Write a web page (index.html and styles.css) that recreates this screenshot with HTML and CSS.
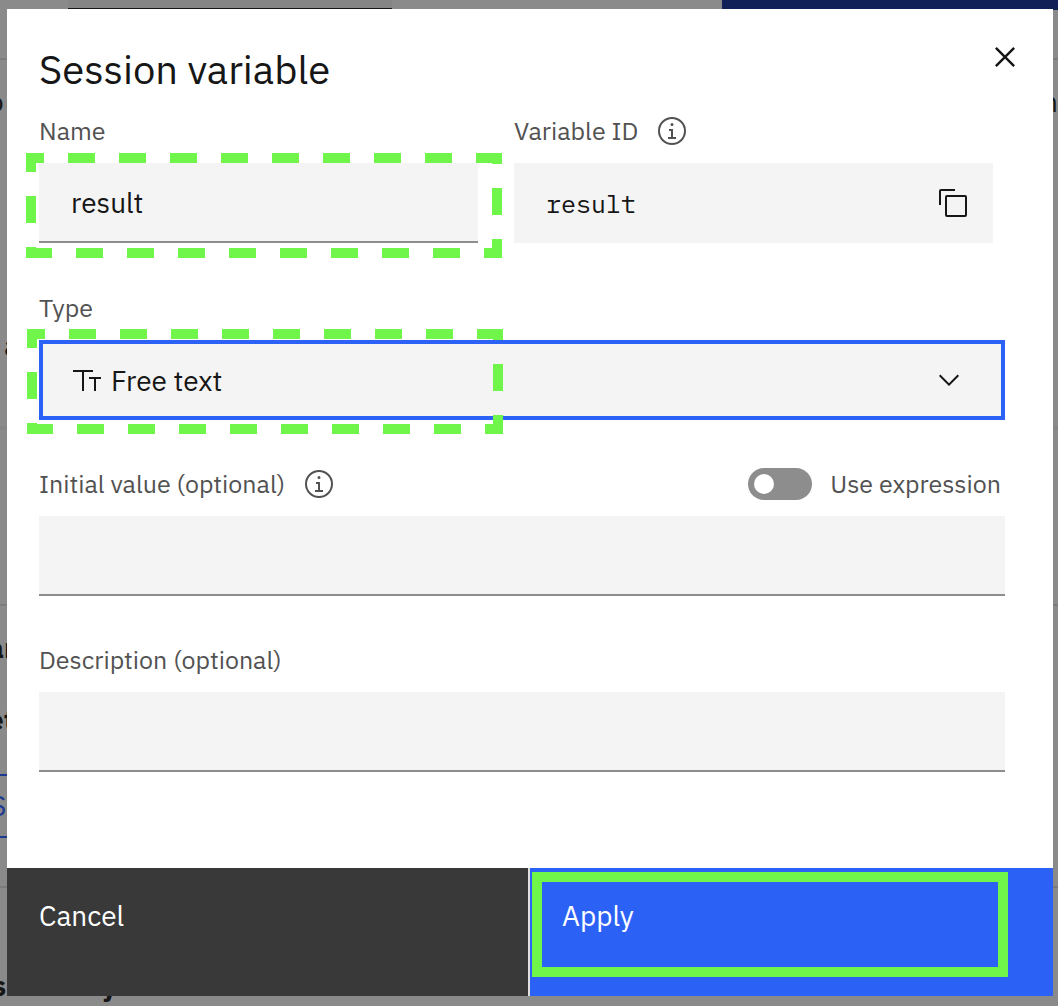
FILE: index.html
```html
<!DOCTYPE html>
<html lang="en">
<head>
<meta charset="utf-8">
<meta name="viewport" content="width=device-width, initial-scale=1">
<title>Session variable</title>
<link rel="stylesheet" href="styles.css">
</head>
<body>
<div class="page" aria-hidden="true">
  <div class="page-header"><span class="page-tab"></span><span class="page-action"></span></div>
  <div class="page-toolbar"></div>
  <div class="page-row row-intro"><span>o</span><span>n</span></div>
  <div class="page-row row-step"><span>a</span></div>
  <div class="page-row row-empty"></div>
  <div class="page-row row-answer">
    <strong>ar</strong>
    <strong>et</strong>
    <span class="page-button">S</span>
  </div>
  <div class="page-row row-last"><strong>s and bays</strong></div>
</div>

<main class="dialog" role="dialog" aria-labelledby="dialog-title">
  <form class="dialog-form">
    <div class="dialog-body">
      <header class="dialog-header">
        <h1 class="dialog-title" id="dialog-title">Session variable</h1>
        <button class="icon-button close" type="button" aria-label="Close">
          <svg viewBox="0 0 32 32" width="40" height="40"><path d="M24 9.4 22.6 8 16 14.6 9.4 8 8 9.4 14.6 16 8 22.6 9.4 24 16 17.4 22.6 24 24 22.6 17.4 16z"/></svg>
        </button>
      </header>

      <div class="field-pair">
        <div class="field">
          <div class="label-row"><label for="name">Name</label></div>
          <div class="control">
            <input class="text-input" id="name" type="text" value="result">
            <svg class="highlight" width="476" height="105" viewBox="0 0 476 105"><rect x="5" y="5" width="466" height="95"/></svg>
          </div>
        </div>
        <div class="field">
          <div class="label-row">
            <label for="variable-id">Variable ID</label>
            <button class="icon-button info" type="button" aria-label="About the variable ID">
              <svg viewBox="0 0 32 32" width="32" height="32"><path d="M17 22v-8h-4v2h2v6h-3v2h8v-2zM16 8a1.5 1.5 0 1 0 1.5 1.5A1.5 1.5 0 0 0 16 8z"/><path d="M16 30a14 14 0 1 1 14-14 14 14 0 0 1-14 14zm0-26a12 12 0 1 0 12 12A12 12 0 0 0 16 4z"/></svg>
            </button>
          </div>
          <div class="copy-box">
            <input class="id-input" id="variable-id" type="text" value="result" readonly>
            <button class="icon-button" type="button" aria-label="Copy">
              <svg viewBox="0 0 32 32" width="32" height="32"><path d="M28 10v18H10V10h18m0-2H10a2 2 0 0 0-2 2v18a2 2 0 0 0 2 2h18a2 2 0 0 0 2-2V10a2 2 0 0 0-2-2z"/><path d="M4 18H2V4a2 2 0 0 1 2-2h14v2H4z"/></svg>
            </button>
          </div>
        </div>
      </div>

      <div class="field">
        <div class="label-row"><label for="type">Type</label></div>
        <div class="control">
          <select class="select" id="type"><option>Free text</option></select>
          <svg class="type-icon" width="28" height="21" viewBox="0 0 28 21"><path d="M0 0h20v2h-9v19H9V2H0zM16 7h12v2h-5v12h-2V9h-5z"/></svg>
          <svg class="chevron" width="32" height="32" viewBox="0 0 16 16"><path d="M8 11 3 6l.7-.7L8 9.6l4.3-4.3.7.7z"/></svg>
          <svg class="highlight highlight-type" width="476" height="105" viewBox="0 0 476 105"><rect x="5" y="5" width="466" height="95"/></svg>
        </div>
      </div>

      <div class="field">
        <div class="label-row">
          <label for="initial">Initial value (optional)</label>
          <button class="icon-button info" type="button" aria-label="About the initial value">
            <svg viewBox="0 0 32 32" width="32" height="32"><path d="M17 22v-8h-4v2h2v6h-3v2h8v-2zM16 8a1.5 1.5 0 1 0 1.5 1.5A1.5 1.5 0 0 0 16 8z"/><path d="M16 30a14 14 0 1 1 14-14 14 14 0 0 1-14 14zm0-26a12 12 0 1 0 12 12A12 12 0 0 0 16 4z"/></svg>
          </button>
          <label class="toggle"><input class="toggle-input" type="checkbox" role="switch">Use expression</label>
        </div>
        <input class="text-input" id="initial" type="text">
      </div>

      <div class="field">
        <div class="label-row"><label for="description">Description (optional)</label></div>
        <input class="text-input" id="description" type="text">
      </div>
    </div>

    <footer class="dialog-footer">
      <button class="footer-button cancel" type="button">Cancel</button>
      <button class="footer-button apply" type="submit">Apply<span class="apply-highlight"></span></button>
    </footer>
  </form>
</main>
</body>
</html>
```
FILE: styles.css
```css
* {
  box-sizing: border-box;
}

body {
  margin: 0;
  min-height: 100vh;
  display: grid;
  background: #8a8a8a;
  color: #161616;
  font-family: "IBM Plex Sans", "Noto Sans", sans-serif;
  font-size: 28px;
}

button,
input,
select {
  margin: 0;
  padding: 0;
  border: 0;
  border-radius: 0;
  font: inherit;
  color: inherit;
}

svg {
  display: block;
  fill: currentColor;
}

/* Dimmed page behind the dialog */
.page {
  grid-area: 1 / 1;
  overflow: hidden;
  display: flex;
  flex-direction: column;
  height: 100vh;
  line-height: 36px;
}

.page-header {
  flex: none;
  display: flex;
  justify-content: space-between;
  height: 10px;
  padding-left: 68px;
}

.page-tab {
  width: 324px;
  height: 9px;
  background: #858585;
  border-bottom: 1px solid #161616;
}

.page-action {
  width: 336px;
  background: #112057;
}

.page-toolbar {
  flex: none;
  height: 50px;
  border-bottom: 2px solid #7c7c7c;
}

.page-row {
  flex: none;
  display: flex;
  justify-content: space-between;
}

.row-intro {
  height: 176px;
  padding: 24px 0 0;
  margin: 0 0 0 -12px;
}

.row-step {
  height: 194px;
  padding: 92px 0 0 4px;
  border-bottom: 4px solid #858585;
}

.row-empty {
  height: 176px;
  border-bottom: 2px solid #7c7c7c;
}

.row-answer {
  flex-direction: column;
  justify-content: flex-start;
  height: 282px;
  padding-top: 24px;
  border-bottom: 2px solid #7c7c7c;
}

.row-answer strong {
  margin: 0 0 36px -12px;
}

.page-button {
  width: 200px;
  height: 64px;
  margin-left: -12px;
  border: 2px solid #1c3a94;
  color: #1c3a94;
  line-height: 60px;
}

.row-last {
  padding-top: 80px;
  margin-left: -8px;
}

/* Dialog */
.dialog {
  grid-area: 1 / 1;
  z-index: 1;
  align-self: start;
  margin: 9px 5px 10px 7px;
  background: #fff;
}

.dialog-body {
  display: flex;
  flex-direction: column;
  gap: 48px;
  padding: 28px 48px 96px 32px;
}

.dialog-header {
  display: flex;
  justify-content: space-between;
  align-items: flex-start;
  height: 78px;
  margin: 0 -20px -48px 0;
}

.dialog-title {
  margin: 0;
  padding-top: 8px;
  font-size: 40px;
  font-weight: 400;
  line-height: 48px;
}

.icon-button {
  flex: none;
  background: none;
  cursor: pointer;
}

.field-pair {
  display: grid;
  grid-template-columns: 439fr 479fr;
  gap: 36px;
  padding-right: 12px;
  margin-bottom: 1px;
}

.field {
  display: flex;
  flex-direction: column;
  gap: 16px;
}

.label-row {
  display: flex;
  align-items: center;
  gap: 18px;
  height: 32px;
  color: #525252;
  font-size: 25px;
  line-height: 32px;
}

.control {
  position: relative;
}

.text-input {
  display: block;
  width: 100%;
  height: 80px;
  padding: 0 32px;
  background: #f4f4f4;
  border-bottom: 2px solid #8d8d8d;
}

.copy-box {
  display: flex;
  align-items: center;
  height: 80px;
  padding: 0 24px 0 32px;
  background: #f4f4f4;
}

.id-input {
  flex: 1;
  min-width: 0;
  background: none;
  font-family: "IBM Plex Mono", "Liberation Mono", monospace;
  font-size: 25px;
}

.select {
  display: block;
  width: 100%;
  height: 80px;
  padding: 0 80px 0 68px;
  appearance: none;
  background: #f4f4f4;
  border: 4px solid #2c61f6;
}

.type-icon {
  position: absolute;
  left: 34px;
  top: 30px;
}

.chevron {
  position: absolute;
  right: 40px;
  top: 24px;
}

.toggle {
  display: flex;
  align-items: center;
  gap: 18px;
  margin-left: auto;
  padding-right: 4px;
}

.toggle-input {
  appearance: none;
  width: 64px;
  height: 32px;
  padding: 6px;
  border-radius: 16px;
  background: #8d8d8d;
}

.toggle-input::before {
  content: "";
  display: block;
  width: 20px;
  height: 20px;
  border-radius: 50%;
  background: #fff;
}

.toggle-input:checked::before {
  margin-left: auto;
}

/* Green call-out frames */
.highlight {
  position: absolute;
  left: -13px;
  top: -10px;
  fill: none;
  stroke: #70f64a;
  stroke-width: 10;
  stroke-dasharray: 27 24;
  stroke-dashoffset: 14;
  pointer-events: none;
}

.highlight-type {
  left: -12px;
  top: -11px;
}

.dialog-footer {
  display: grid;
  grid-template-columns: 1fr 1fr;
}

.footer-button {
  position: relative;
  display: flex;
  height: 128px;
  padding: 30px 32px;
  color: #fff;
  line-height: 36px;
}

.cancel {
  background: #393939;
  border-right: 2px solid #e0e0e0;
}

.apply {
  background: #2c61f6;
}

.apply-highlight {
  position: absolute;
  inset: 4px 45px 19px 2px;
  border: 10px solid #70f64a;
}
```
